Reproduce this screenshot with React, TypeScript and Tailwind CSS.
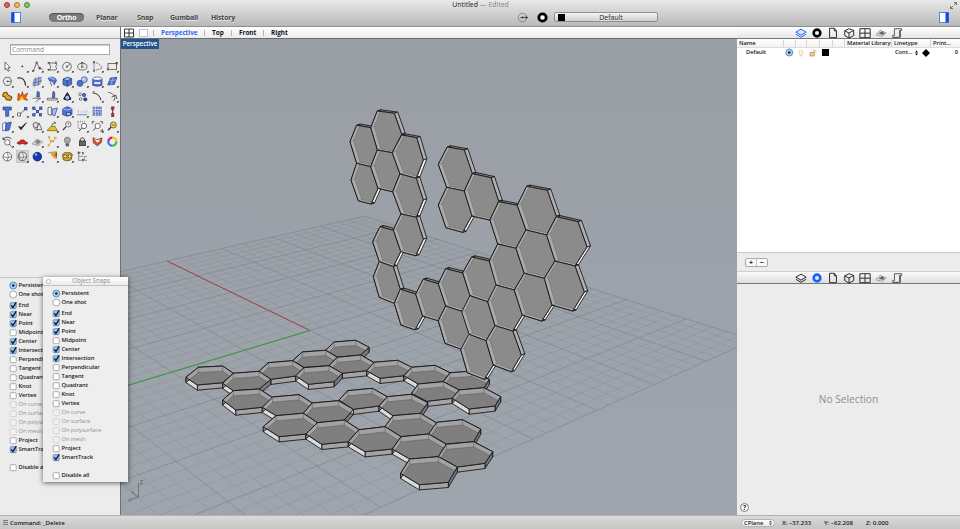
import React from "react";

type Pt = [number, number];

/* ---------- viewport geometry ---------- */

// Each cluster holds hexagons in thirds of a pixel, relative to its origin.
type Cluster = { ox: number; oy: number; hexes: number[][] };

// Vertex order: TL, TR, R, BR, BL, L
const wall: Cluster[] = [
  {
    ox: 340, oy: 100,
    hexes: [
      [112, 33, 163, 40, 185, 103, 157, 158, 112, 150, 92, 83],
      [50, 76, 92, 83, 112, 150, 92, 200, 50, 190, 30, 125],
      [50, 190, 92, 200, 114, 265, 93, 312, 55, 302, 33, 240],
      [112, 150, 157, 158, 180, 222, 158, 275, 114, 265, 92, 200],
      [185, 105, 230, 113, 250, 180, 229, 235, 180, 222, 157, 158],
      [180, 222, 229, 235, 250, 300, 229, 352, 183, 342, 158, 275],
    ],
  },
  {
    ox: 365, oy: 180,
    hexes: [
      [108, 102, 154, 112, 175, 178, 152, 227, 107, 215, 85, 150],
      [45, 140, 85, 151, 107, 215, 85, 260, 43, 245, 23, 185],
      [43, 245, 85, 260, 106, 328, 88, 370, 43, 352, 25, 290],
      [106, 328, 152, 342, 173, 408, 150, 449, 108, 435, 88, 370],
      [175, 298, 220, 311, 242, 378, 220, 422, 173, 408, 152, 342],
      [242, 266, 293, 279, 316, 348, 293, 395, 242, 378, 220, 311],
      [242, 378, 293, 395, 315, 465, 290, 508, 240, 490, 220, 422],
    ],
  },
  {
    ox: 430, oy: 130,
    hexes: [
      [52, 51, 103, 60, 127, 131, 103, 183, 50, 172, 25, 103],
      [50, 172, 103, 183, 126, 256, 98, 307, 48, 293, 25, 225],
      [127, 131, 183, 143, 206, 214, 180, 270, 126, 258, 103, 183],
      [125, 381, 178, 393, 200, 465, 173, 515, 120, 497, 98, 428],
      [120, 497, 173, 515, 195, 587, 168, 632, 117, 613, 95, 545],
      [117, 613, 168, 632, 190, 705, 163, 748, 112, 728, 92, 658],
      [206, 215, 262, 226, 288, 300, 258, 355, 203, 342, 180, 270],
      [203, 342, 258, 355, 283, 430, 253, 480, 198, 465, 178, 393],
      [198, 465, 253, 480, 277, 555, 248, 603, 195, 587, 173, 515],
      [195, 587, 248, 603, 274, 675, 244, 725, 190, 705, 168, 632],
      [290, 169, 352, 181, 379, 259, 350, 315, 288, 300, 262, 226],
      [288, 300, 350, 315, 375, 393, 343, 445, 283, 430, 258, 355],
      [283, 430, 343, 445, 366, 525, 335, 573, 277, 555, 253, 480],
      [379, 260, 444, 275, 471, 351, 435, 408, 375, 393, 350, 315],
      [375, 393, 435, 408, 463, 486, 428, 543, 366, 525, 343, 445],
    ],
  },
];

const floor: Cluster[] = [
  {
    ox: 180, oy: 330,
    hexes: [
      [462, 36, 527, 31, 567, 52, 542, 75, 472, 81, 437, 61],
      [367, 66, 437, 61, 472, 82, 447, 107, 372, 112, 338, 92],
      [265, 98, 338, 92, 372, 113, 348, 138, 272, 148, 237, 124],
      [55, 112, 128, 108, 160, 130, 128, 158, 52, 165, 18, 142],
      [160, 130, 237, 124, 272, 148, 238, 177, 160, 182, 128, 160],
      [472, 82, 542, 75, 582, 98, 560, 122, 485, 130, 447, 107],
      [372, 113, 447, 107, 487, 130, 462, 155, 385, 163, 347, 137],
      [160, 182, 238, 177, 278, 203, 247, 232, 167, 240, 128, 210],
      [278, 201, 357, 194, 397, 219, 370, 250, 288, 257, 247, 232],
      [397, 219, 475, 212, 520, 238, 493, 270, 412, 278, 370, 250],
      [288, 257, 370, 250, 412, 278, 378, 312, 297, 320, 250, 290],
      [412, 278, 493, 270, 537, 299, 505, 335, 425, 343, 378, 312],
    ],
  },
  {
    ox: 330, oy: 330,
    hexes: [
      [132, 97, 203, 91, 245, 112, 222, 137, 150, 145, 110, 122],
      [245, 112, 315, 106, 360, 128, 340, 155, 265, 162, 222, 137],
      [360, 128, 425, 124, 478, 148, 462, 173, 387, 180, 340, 155],
      [265, 162, 340, 155, 387, 180, 367, 205, 290, 214, 245, 190],
      [387, 180, 462, 173, 512, 200, 495, 228, 417, 237, 367, 205],
      [53, 182, 127, 175, 172, 200, 147, 228, 70, 238, 27, 210],
      [172, 200, 245, 193, 293, 218, 271, 250, 189, 257, 147, 228],
      [189, 257, 271, 250, 320, 279, 296, 312, 213, 320, 165, 290],
      [320, 277, 397, 269, 452, 297, 431, 335, 349, 342, 296, 312],
      [87, 299, 165, 290, 213, 320, 187, 357, 105, 365, 55, 335],
      [213, 320, 296, 312, 349, 343, 325, 380, 239, 387, 187, 357],
      [349, 343, 431, 335, 488, 365, 465, 400, 382, 411, 325, 380],
      [239, 387, 325, 380, 382, 411, 355, 457, 268, 464, 212, 430],
    ],
  },
];

const toPts = (c: Cluster): Pt[][] =>
  c.hexes.map((h) =>
    [0, 1, 2, 3, 4, 5].map((i) => [c.ox + h[2 * i] / 3, c.oy + h[2 * i + 1] / 3] as Pt),
  );

const str = (p: Pt[]) => p.map((q) => q[0].toFixed(1) + "," + q[1].toFixed(1)).join(" ");

function Shell({ id, clusters, dx, dy, shades, rim, base, line }: {
  id: string; clusters: Cluster[]; dx: number; dy: number; shades: string[]; rim: string; base: string; line: string;
}) {
  const hexes = clusters.flatMap(toPts);
  const shift = (p: Pt): Pt => [p[0] + dx, p[1] + dy];
  return (
    <g strokeLinejoin="round">
      {hexes.map((h, n) => (
        <g key={n} stroke="#141414" strokeWidth="0.85">
          {h.map((p, i) => {
            const q = h[(i + 1) % 6];
            return <polygon key={i} points={str([p, q, shift(q), shift(p)])} fill={shades[i]} />;
          })}
        </g>
      ))}
      {hexes.map((h, n) => (
        <g key={n}>
          <clipPath id={id + n}>
            <polygon points={str(h)} />
          </clipPath>
          <polygon points={str(h)} fill={rim} />
          <g clipPath={`url(#${id}${n})`}>
            {h.map((p, i) => (
              <line key={i} x1={p[0]} y1={p[1]} x2={p[0] + dx} y2={p[1] + dy} stroke={line} strokeWidth="0.5" />
            ))}
            <polygon points={str(h.map(shift))} fill={base} stroke={line} strokeWidth="0.5" />
          </g>
          <polygon points={str(h)} fill="none" stroke="#141414" strokeWidth="0.9" />
        </g>
      ))}
    </g>
  );
}

// Projective map taking the unit square's corners to a quad.
function projector(p0: Pt, p1: Pt, p2: Pt, p3: Pt) {
  const sx = p0[0] - p1[0] + p2[0] - p3[0];
  const sy = p0[1] - p1[1] + p2[1] - p3[1];
  const ax = p1[0] - p2[0], bx = p3[0] - p2[0];
  const ay = p1[1] - p2[1], by = p3[1] - p2[1];
  const det = ax * by - bx * ay;
  const g = (sx * by - bx * sy) / det;
  const h = (ax * sy - sx * ay) / det;
  const a = p1[0] - p0[0] + g * p1[0], b = p3[0] - p0[0] + h * p3[0];
  const d = p1[1] - p0[1] + g * p1[1], e = p3[1] - p0[1] + h * p3[1];
  return (u: number, v: number) => {
    const w = g * u + h * v + 1;
    return { w, x: (a * u + b * v + p0[0]) / w, y: (d * u + e * v + p0[1]) / w };
  };
}

const project = projector([310, 330.5], [167, 261], [365, 216], [523, 266.6]);

function GroundGrid() {
  const n = 20;
  const out: React.ReactElement[] = [];
  const segment = (key: string, at: (t: number) => [number, number], major: boolean) => {
    let lo = -1;
    while (lo < 1 && project(...at(lo)).w < 0.12) lo += 0.01;
    const a = project(...at(lo));
    const b = project(...at(1));
    out.push(
      <line key={key} x1={a.x} y1={a.y} x2={b.x} y2={b.y} stroke={major ? "#7b8189" : "#8b9199"} strokeWidth={major ? 0.6 : 0.5} />,
    );
  };
  for (let i = -n; i <= n; i++) {
    segment("u" + i, (t) => [i / n, t], i % 5 === 0);
    segment("v" + i, (t) => [t, i / n], i % 5 === 0);
  }
  return <g>{out}</g>;
}

function Viewport() {
  return (
    <svg className="block" width="616" height="476" viewBox="121 39 616 476">
      <defs>
        <linearGradient id="sky" x1="0" y1="0" x2="0" y2="1">
          <stop offset="0" stopColor="#9a9fa6" />
          <stop offset="1" stopColor="#9fa5ad" />
        </linearGradient>
      </defs>
      <rect x="121" y="39" width="616" height="476" fill="url(#sky)" />
      <GroundGrid />
      <line x1="310" y1="330.5" x2="167" y2="261" stroke="#a23a3a" strokeWidth="0.9" />
      <line x1="310" y1="330.5" x2="121" y2="387.5" stroke="#2f9a35" strokeWidth="1" />
      <Shell id="f" clusters={floor} dx={0} dy={5.2} shades={["#777", "#777", "#777", "#a4a4a4", "#dadada", "#8a8a8a"]} rim="#a3a3a3" base="#7f7f7f" line="#555" />
      <Shell id="w" clusters={wall} dx={3.5} dy={-1.2} shades={["#868686", "#b0b0b0", "#f4f4f4", "#999", "#888", "#888"]} rim="#ababab" base="#8b8b8b" line="#6a6a6a" />
      <g stroke="#5d636b" strokeWidth="0.7" fill="none">
        <path d="M138.500 497V483M138.500 497L129 499.500M138.500 497L132 492.500" />
        <path d="M140 480.500h3l-3 3h3M128 500l2 1.500 1.500-2M131 491l3 2" />
      </g>
    </svg>
  );
}

/* ---------- tool palette ---------- */

const Dots = ({ at }: { at: Pt[] }) => (
  <>{at.map(([x, y], i) => <rect key={i} x={x - 2} y={y - 2} width="4" height="4" fill="#fff" stroke="#333" strokeWidth="1.800" />)}</>
);
const Mark = () => <path d="M36 40h4v-4z" fill="#111" stroke="#111" strokeWidth="1.500" />;

const B = "#4f70cf";
const L = "#a9bdf3";
const D = "#263b86";

const tools: React.ReactNode[] = [
  <path d="M15 9V33L20 28L24 37L28 35L24 26H31Z" fill="#fff" />,
  <><circle cx="22" cy="22" r="1.8" fill="#222" /><Mark /></>,
  <><path d="M10 36L20 11L29 28L38 31" /><Dots at={[[10, 36], [20, 11], [29, 28]]} /><Mark /></>,
  <><path d="M12 12H30Q40 12 32 22Q38 33 30 33H14Q22 24 12 12" /><Dots at={[[11, 12], [33, 11], [11, 33]]} /><Mark /></>,
  <><circle cx="21" cy="23" r="13" /><path d="M21 23L31 13" /><Dots at={[[21, 23]]} /><Mark /></>,
  <><ellipse cx="22" cy="23" rx="14" ry="10" /><Dots at={[[22, 23], [22, 13]]} /><Mark /></>,
  <><path d="M12 35V10Q32 13 36 28L12 35" strokeDasharray="4 2" /><Dots at={[[12, 10], [12, 35]]} /><Mark /></>,
  <><rect x="9" y="13" width="26" height="18" /><Dots at={[[9, 31], [35, 13]]} /><Mark /></>,

  <><path d="M16 10L29 10L35 22L29 34L16 34L9 22Z" /><path d="M22 22H33" /><circle cx="22" cy="22" r="1.500" /><Mark /></>,
  <><path d="M10 12Q30 10 32 35" strokeWidth="3.500" /><rect x="7" y="9" width="5" height="5" fill="#777" stroke="none" /><Mark /></>,
  <><path d="M12 16L34 10L30 30L9 36Z" fill={L} stroke={B} /><path d="M18 10L14 38M27 8L24 36M8 28L36 20" stroke="#555" /><Mark /></>,
  <><path d="M9 12Q24 4 35 18L27 32Q26 20 14 21Z" fill={B} stroke={D} /><path d="M10 12Q20 8 28 18" stroke={L} strokeWidth="4" /><path d="M16 24L20 36" /><Mark /></>,
  <><path d="M9 16L22 10L35 14V31L22 37L9 32Z" fill={B} stroke={D} /><path d="M9 16L22 20L35 14L22 10Z" fill={L} stroke={D} /><path d="M22 20V37" stroke={D} /><Mark /></>,
  <><circle cx="15" cy="28" r="9" fill={B} stroke={D} /><circle cx="28" cy="17" r="9" fill={L} stroke={D} /><path d="M22 17L28 12" stroke="#fff" strokeWidth="3" /><Mark /></>,
  <><path d="M8 14V34Q22 40 36 34V14" fill={B} stroke={D} /><ellipse cx="22" cy="14" rx="14" ry="5" fill="#fff" stroke={D} /><path d="M13 27h18" stroke="#fff" strokeWidth="5" /><Mark /></>,
  <><path d="M16 12L36 10L28 31L8 33Z" fill={B} stroke={D} /><path d="M13 20L33 18M24 11L18 32" stroke={L} /><Mark /></>,

  <><path d="M10 12L20 9L24 18L36 24L32 34L18 32L16 24L8 22Z" fill="#e4a326" stroke="#5c3d05" strokeWidth="3" /></>,
  <><path d="M8 34L10 12L18 22L22 8L26 20L38 12L32 26L38 34L24 30Z" fill="#ec6b12" stroke="#8e2c06" /><path d="M14 33L20 22L28 32Z" fill="#ffd22e" stroke="none" /></>,
  <><path d="M22 7L28 10V24H20Z" fill={B} stroke={D} /><path d="M8 28H32L16 38" fill="#fff" /><Mark /></>,
  <><path d="M24 7L29 10V26H22Z" fill={B} stroke={D} /><path d="M7 28H37V33H7Z" fill="#fff" /><Mark /></>,
  <><path d="M22 11L33 30Q22 37 11 30Z" fill={D} stroke="#111" strokeWidth="3" /><circle cx="22" cy="26" r="6" fill={L} stroke="none" /><Mark /></>,
  <><circle cx="15" cy="16" r="4" fill="#fff" /><circle cx="27" cy="18" r="5" fill={B} stroke={D} /><circle cx="17" cy="30" r="4" fill="#fff" /><circle cx="31" cy="31" r="5" fill={D} stroke={D} /></>,
  <><path d="M8 12Q28 12 33 34" strokeWidth="3" /><path d="M8 8h6" /><Mark /></>,
  <><path d="M9 10Q26 12 30 26" strokeWidth="2" /><path d="M20 24L32 18L36 30M30 26L26 36" strokeWidth="2.500" /><Mark /></>,

  <><path d="M9 9H34V18H26V37H17V18H9Z" fill={B} stroke={D} /><Mark /></>,
  <><path d="M13 33L32 14" /><rect x="8" y="27" width="9" height="9" fill="#fff" /><rect x="28" y="10" width="8" height="8" fill={B} stroke={D} /><Mark /></>,
  <><path d="M12 12L33 34M12 34L33 12" stroke={D} /><g fill={B} stroke={D}><rect x="8" y="9" width="7" height="7" /><rect x="29" y="9" width="7" height="7" /><rect x="19" y="19" width="7" height="7" /><rect x="8" y="29" width="7" height="7" /><rect x="28" y="29" width="7" height="7" /></g></>,
  <><path d="M9 11L19 9V34L9 31Z" fill="#fff" /><path d="M22 15L37 12L29 36L22 32Z" fill={L} stroke={D} /><Mark /></>,
  <><path d="M8 14L22 8L36 14V31L22 37L8 32Z" fill={B} stroke={D} /><path d="M8 14L22 18L36 14" stroke={L} strokeWidth="3" /><rect x="19" y="25" width="13" height="10" fill={L} stroke={D} /><Mark /></>,
  <><path d="M7 32h30" stroke={B} strokeDasharray="4 2" strokeWidth="4" /><path d="M10 26v-8M18 26v-4M26 26v-4M34 26v-8" stroke="#999" /><Mark /></>,
  <g fill={L} stroke="#4a5da8" strokeWidth="1.800"><rect x="9" y="9" width="6" height="6" /><rect x="19" y="9" width="6" height="6" /><rect x="29" y="9" width="6" height="6" /><rect x="9" y="19" width="6" height="6" /><rect x="19" y="19" width="6" height="6" /><rect x="29" y="19" width="6" height="6" /><rect x="9" y="29" width="6" height="6" /><rect x="19" y="29" width="6" height="6" /><rect x="29" y="29" width="6" height="6" /></g>,
  <><path d="M18 9h11M23 9v28M18 37h10" stroke="#222" strokeWidth="2.500" /><circle cx="23" cy="14" r="4" fill="#d93636" stroke="#701010" /><circle cx="23" cy="31" r="4" fill="#d93636" stroke="#701010" /></>,

  <><path d="M8 14L18 9V32L8 36Z" fill="#fff" stroke={D} /><path d="M18 13L34 9L28 33L16 36Z" fill={B} stroke={D} /><Mark /></>,
  <path d="M11 23L18 32L34 11L19 25Z" fill="#111" strokeWidth="3" />,
  <><circle cx="17" cy="18" r="8" fill="#ddd" /><path d="M27 12L36 32H20Z" fill="#eee" /><path d="M11 26q6 8 12 8" /><Mark /></>,
  <><path d="M6 35L18 22H30L37 35Z" fill="#e8c527" stroke="#5f4d08" /><path d="M20 21Q20 10 32 11L27 7M32 11L28 16" /><Mark /></>,
  <><circle cx="25" cy="16" r="8" fill="#f4f4f4" /><path d="M18 23L9 33" strokeWidth="3.500" /><path d="M25 12v5" /></>,
  <><rect x="9" y="8" width="20" height="20" strokeDasharray="3 3" /><circle cx="27" cy="21" r="8" fill="#fff" /><path d="M20 28L12 36" strokeWidth="3" /><Mark /></>,
  <><circle cx="23" cy="21" r="8" fill="#fff" /><path d="M17 27L9 35M7 14V8H13M31 8h6v6M37 30v6H31" strokeWidth="2.500" /><Mark /></>,
  <><circle cx="25" cy="18" r="9" fill="#f5dc3d" /><path d="M18 25L9 34" strokeWidth="4" /><path d="M20 18h10" /><Mark /></>,

  <><circle cx="22" cy="25" r="8" fill="#fff" /><path d="M9 16Q21 4 34 14M9 10V17H15M28 31L34 37" strokeWidth="2.500" /><Mark /></>,
  <><path d="M7 25L13 23L17 18H27L31 23L37 25V29H7Z" fill="#df2222" stroke="#a51212" /><circle cx="14" cy="30" r="2" /><circle cx="31" cy="30" r="2" /></>,
  <><path d="M6 30L20 15L38 24L25 35Z" fill="#bcbcbc" stroke="#999" /><path d="M12 29L30 20M17 20L32 29" stroke="#eee" /><path d="M19 20h9v7h-9z" fill="#8a978b" stroke="#666" /><Mark /></>,
  <><path d="M9 10h7M27 11h8M14 22h13M8 34h7" stroke="#e9a92e" strokeWidth="6" /><path d="M12 13L18 20M30 15L23 22M13 31L18 25" stroke="#888" /><Mark /></>,
  <><path d="M17 28Q11 20 14 13Q22 5 30 13Q33 20 27 28Z" fill="#aaa" stroke="#666" /><path d="M18 30h8v6h-8z" fill="#777" stroke="#444" /></>,
  <><path d="M16 22V16Q22 6 28 16V22" strokeWidth="3" /><rect x="13" y="21" width="18" height="14" fill="#666" stroke="#222" /><Mark /></>,
  <><path d="M9 11L21 17L36 12L34 25L22 35L10 26Z" fill="#e8531d" stroke="#6d1e06" /><path d="M12 13L22 19L32 16L22 26Z" fill="#fff" stroke="none" /><path d="M10 26L22 35L34 25" stroke={B} strokeWidth="3" /></>,
  <g strokeWidth="7"><path d="M22 11A12 12 0 0 1 34 23" stroke="#f0c814" /><path d="M34 23A12 12 0 0 1 22 35" stroke="#33c438" /><path d="M22 35A12 12 0 0 1 10 23" stroke="#2a7ff0" /><path d="M10 23A12 12 0 0 1 14 14" stroke="#a02ad8" /><path d="M14 14A12 12 0 0 1 22 11" stroke="#ed2525" /></g>,

  <><circle cx="22" cy="23" r="13" fill="#fafafa" /><path d="M9 23Q22 30 35 23M22 10Q28 23 22 36" stroke="#555" /></>,
  <><rect x="5" y="5" width="36" height="36" fill="#d2d2d2" stroke="#999" strokeWidth="1" /><circle cx="22" cy="22" r="13" fill="#e8e8e8" /><path d="M9 23Q22 28 35 23M22 9Q29 22 22 35M14 12Q12 22 15 33" stroke="#555" strokeWidth="1.700" /><Mark /></>,
  <><circle cx="22" cy="23" r="13" fill="#1739b4" stroke="#0c1c60" /><circle cx="18" cy="17" r="4" fill="#8ba4f5" stroke="none" /><Mark /></>,
  <><path d="M15 12L36 8L34 30Q24 28 15 12Z" fill="#ee9a24" stroke="none" /><path d="M9 11L35 8" stroke="#777" /><path d="M31 16L36 10L34 30Z" fill="#333" stroke="none" /><Mark /></>,
  <><path d="M8 16L14 11H31L37 16L34 31L27 35H16L9 31Z" fill="#dba520" stroke="#4d3a06" /><circle cx="16" cy="22" r="5" fill="#f7e9a8" /><circle cx="29" cy="22" r="5" fill="#f7e9a8" /><Mark /></>,
  <><path d="M11 11V34H22M11 22H24M18 11H12M28 22H36M28 34H36M28 22V34" stroke="#666" /><Dots at={[[11, 11], [24, 13], [24, 34]]} /></>,
];

function Palette() {
  return (
    <div className="grid w-[120px] grid-cols-8">
      {tools.map((t, i) => (
        <svg key={i} className="h-[15px] w-[15px]" viewBox="0 0 45 45" fill="none" stroke="#333" strokeWidth="2">
          {t}
        </svg>
      ))}
    </div>
  );
}

/* ---------- object snaps ---------- */

const snaps: { name: string; on?: boolean; off?: boolean }[] = [
  { name: "End", on: true },
  { name: "Near", on: true },
  { name: "Point", on: true },
  { name: "Midpoint" },
  { name: "Center", on: true },
  { name: "Intersection", on: true },
  { name: "Perpendicular" },
  { name: "Tangent" },
  { name: "Quadrant" },
  { name: "Knot" },
  { name: "Vertex" },
  { name: "On curve", off: true },
  { name: "On surface", off: true },
  { name: "On polysurface", off: true },
  { name: "On mesh", off: true },
  { name: "Project" },
  { name: "SmartTrack", on: true },
];

function Box({ on, off }: { on?: boolean; off?: boolean }) {
  return (
    <svg className="h-[9px] w-[9px] shrink-0" viewBox="0 0 9 9">
      <rect x="1.2" y="1.700" width="6" height="6" rx="1" fill={on ? "#9cc5ee" : off ? "#f1f1f1" : "#fff"} stroke={on ? "#4b74a8" : off ? "#c8c8c8" : "#8d8d8d"} strokeWidth="0.7" />
      {on && <path d="M2.300 4.400L3.900 6.500L7.300 1.200" fill="none" stroke="#0d1830" strokeWidth="1.3" />}
    </svg>
  );
}

function Radio({ on }: { on?: boolean }) {
  return (
    <svg className="h-[9px] w-[9px] shrink-0" viewBox="0 0 9 9">
      <circle cx="4.300" cy="4.500" r="3.500" fill={on ? "#a7d0f7" : "#fff"} stroke={on ? "#3f6ca6" : "#888"} strokeWidth="0.7" />
      {on && <circle cx="4.300" cy="4.500" r="1.300" fill="#10213f" />}
    </svg>
  );
}

function Row({ icon, text, dim }: { icon: React.ReactNode; text: string; dim?: boolean }) {
  return (
    <div className={"flex h-[9px] items-center gap-[0.5px] whitespace-nowrap text-[5.8px] leading-[9px] tracking-[-0.08px] " + (dim ? "text-[#909090]" : "font-semibold text-[#1a1a1a]")}>
      {icon}
      <span>{text}</span>
    </div>
  );
}

function SnapList() {
  return (
    <div className="flex flex-col">
      <Row icon={<Radio on />} text="Persistent" />
      <Row icon={<Radio />} text="One shot" />
      <div className="h-[2px]" />
      {snaps.map((s) => (
        <Row key={s.name} icon={<Box on={s.on} off={s.off} />} text={s.name} dim={s.off} />
      ))}
      <div className="h-[9px]" />
      <Row icon={<Box />} text="Disable all" />
    </div>
  );
}

/* ---------- inspector ---------- */

function PanelTabs({ active }: { active: number }) {
  const c = (i: number, base = "#222") => (i === active ? "#1463ff" : base);
  return (
    <div className="flex h-[11px] items-center justify-center">
      {[
        <path d="M1 6L7 2.500L13 6L7 9.500ZM1 8.500L7 12L13 8.500" stroke={c(0)} fill={active === 0 ? "#dbe8ff" : "none"} />,
        <circle cx="7" cy="7" r="3.900" stroke={c(1, "#000")} strokeWidth="3" />,
        <path d="M3 1.500H8.500L11 4.500V12.500H3ZM8.500 1.500V4.500H11" />,
        <path d="M2 4.500L7 2L12.500 4V10L7 13L2 10ZM2 4.500L7 7L12.500 4M7 7V13" />,
        <path d="M1 2H13V12.500H1ZM7 2V12.500M1 7.200H13" />,
        <g stroke="#999"><path d="M1 9L6 4L13 7L8 11Z" fill="#ddd" /><path d="M5 7.500l4-2 1 3z" fill="#666" stroke="#555" /></g>,
        <path d="M4 2H12.500V4H10V12H2V10H4ZM10 12H11V4M2 12.500H9" stroke="#555" fill="#eee" />,
      ].map((d, i) => (
        <svg key={i} className="mx-[2px] h-[12px] w-[12px]" viewBox="0 0 14 14" fill="none" stroke="#222" strokeWidth="1.1">
          {d}
        </svg>
      ))}
    </div>
  );
}

function LayerTable() {
  return (
    <div className="flex h-[214px] flex-col border-b border-[#c9c9c9] bg-white text-[5.8px] font-semibold tracking-[-0.08px] text-[#1a1a1a]">
      <div className="flex h-[9px] items-center border-b border-[#dcdcdc] bg-gradient-to-b from-white to-[#f1f1f1] leading-[8px]">
        <span className="w-[46px] pl-[2px]">Name</span>
        {[12, 11, 13, 13, 12].map((w, i) => (
          <span key={i} className="h-[7px] border-l border-[#d4d4d4]" style={{ width: w }} />
        ))}
        <span className="w-[47px] whitespace-nowrap border-l border-[#d4d4d4] pl-[2px]">Material Library</span>
        <span className="w-[26px] border-l border-[#d4d4d4] pl-[2px]">Linetype</span>
        <span className="w-[13px] border-l border-[#d4d4d4]" />
        <span className="border-l border-[#d4d4d4] pl-[2px]">Print...</span>
      </div>
      <div className="flex h-[9px] items-center leading-[9px]">
        <span className="w-[48px] pl-[9px]">Default</span>
        <Radio on />
        <svg className="ml-[3px] h-[8px] w-[8px]" viewBox="0 0 8 8" fill="#fff6d8" stroke="#d8c9a0" strokeWidth="0.7">
          <path d="M3 5.500Q1 3 2.500 1.500Q4 .5 5.500 1.500Q7 3 5 5.500V7H3Z" />
        </svg>
        <svg className="ml-[4px] h-[8px] w-[8px]" viewBox="0 0 8 8" fill="#eec894" stroke="#b98a50" strokeWidth="0.7">
          <rect x="1" y="3.500" width="4.500" height="3.500" />
          <path d="M4 3.500V2Q5.500 0 6.800 2V3" fill="none" />
        </svg>
        <span className="ml-[5px] h-[7px] w-[7px] bg-black" />
        <span className="ml-[66px] w-[19px]">Cont...</span>
        <svg className="ml-[1px] h-[6px] w-[3px]" viewBox="0 0 3 6"><path d="M0 2.500L1.500 .5L3 2.500ZM0 3.500L1.500 5.500L3 3.500Z" /></svg>
        <svg className="ml-[4px] h-[8px] w-[8px]" viewBox="0 0 8 8"><path d="M4 0L8 4L4 8L0 4Z" /></svg>
        <span className="ml-auto pr-[2px]">0</span>
      </div>
    </div>
  );
}

/* ---------- window ---------- */

function SplitIcon({ flip }: { flip?: boolean }) {
  return (
    <svg className="h-[11px] w-[10px]" viewBox="0 0 10 11">
      <rect x=".5" y=".5" width="9" height="10" fill="#fff" stroke="#4d86f5" />
      <rect x={flip ? 6.500 : 0.5} y=".5" width="3" height="10" fill="#1048e6" />
    </svg>
  );
}

function FourView() {
  return (
    <svg className="h-[10px] w-[10px]" viewBox="0 0 10 10" fill="#fff" stroke="#222" strokeWidth="0.9">
      <path d="M.5 1H9.500V9H.5ZM5 1V9M.5 5H9.500" />
    </svg>
  );
}

const lights = [
  "border-[#a5352f] bg-[#ee5f57]",
  "border-[#a9792a] bg-[#f6bd4a]",
  "border-[#4c8a35] bg-[#7fcb5c]",
];

export default function App() {
  return (
    <div className="relative flex h-[529px] w-[960px] flex-col overflow-hidden bg-[#ececec] font-['Open_Sans','Noto_Sans',sans-serif] text-[#222]">
      <header className="h-[27px] border-b border-[#8f8f8f] bg-gradient-to-b from-[#e9e9e9] to-[#b9b9b9]">
        <div className="flex h-[10px] items-center">
          <div className="flex w-[100px] gap-[4px] pl-[4px]">
            {lights.map((c) => <span key={c} className={"h-[6px] w-[6px] rounded-full border-[0.5px] " + c} />)}
          </div>
          <div className="w-[761px] text-center text-[6.900px] font-medium leading-[10px]">
            Untitled <span className="text-[#858585]">— Edited</span>
          </div>
          <svg className="ml-auto mr-[3px] h-[7px] w-[7px]" viewBox="0 0 7 7" fill="none" stroke="#666" strokeWidth="0.9">
            <path d="M4 3L6.500 .5M4 .5H6.500V3M3 4L.5 6.500M.5 4V6.500H3" />
          </svg>
        </div>
        <div className="flex h-[14px] items-center text-[6.900px] font-bold leading-[9px] tracking-[-0.15px] text-[#444] [text-shadow:0_1px_0_#eee]">
          <div className="w-[49px] pl-[11px]"><SplitIcon /></div>
          <span className="h-[9px] w-[35px] rounded-full bg-[#7a7a7a] text-center text-white shadow-[inset_0_1px_1px_#555] [text-shadow:none]">Ortho</span>
          <span className="ml-[12px] w-[41px]">Planar</span>
          <span className="w-[33px]">Snap</span>
          <span className="w-[41px]">Gumball</span>
          <span className="w-[306px]">History</span>
          <svg className="h-[11px] w-[11px]" viewBox="0 0 11 11" fill="none" stroke="#777" strokeWidth="0.8">
            <circle cx="5.500" cy="5.500" r="4.300" /><path d="M3.500 5.500H10.500M8.500 4.200L10.500 5.500L8.500 6.800" stroke="#333" /><circle cx="5.300" cy="5.500" r="0.900" fill="#333" stroke="none" />
          </svg>
          <svg className="ml-[9px] h-[11px] w-[11px]" viewBox="0 0 11 11" fill="#fff" stroke="#000" strokeWidth="2.800">
            <circle cx="5.500" cy="5.500" r="3.700" />
          </svg>
          <div className="ml-[6px] flex h-[10px] w-[104px] items-center rounded-[2px] border border-[#8f8f8f] bg-gradient-to-b from-[#f4f4f4] to-[#cfcfcf]">
            <span className="ml-[3px] h-[7px] w-[7px] bg-black" />
            <span className="flex-1 text-center font-medium tracking-normal text-[#222]">Default</span>
          </div>
          <div className="ml-auto mr-[11px]"><SplitIcon flip /></div>
        </div>
      </header>

      <main className="flex h-[488px]">
        <aside className="flex w-[120px] flex-col">
          <div className="h-[12px] border-b border-[#a5a5a5] bg-gradient-to-b from-[#fafafa] to-[#e6e6e6]" />
          <div className="ml-[10px] mt-[5px] h-[11px] w-[100px] border border-[#aaa] bg-white pl-[1px] text-[6.600px] leading-[9px] text-[#8a8a8a] shadow-[inset_0_1px_0_#ccc]">Command</div>
          <div className="mt-[3.500px]"><Palette /></div>
          <div className="mt-[113.500px] border-t border-[#c4c4c4] pl-[9px] pt-[2.500px]">
            <SnapList />
          </div>
        </aside>

        <section className="flex w-[617px] flex-col border-l border-[#6d7279]">
          <div className="flex h-[12px] items-center border-b border-[#666c73] bg-gradient-to-b from-white to-[#ebebeb] text-[6.400px] font-bold leading-[10px] text-[#111]">
            <div className="flex w-[32px] items-center gap-[5px] pl-[3px]">
              <FourView />
              <span className="h-[8px] w-[9px] border border-[#b6c4f2] bg-white" />
            </div>
            <span className="h-[6px] w-px bg-[#b5b5b5]" />
            <span className="w-[50px] pl-[7px] tracking-[-0.05px] text-[#2d6cf6]">Perspective</span>
            <span className="h-[6px] w-px bg-[#b5b5b5]" />
            <span className="w-[26px] pl-[7px]">Top</span>
            <span className="h-[6px] w-px bg-[#b5b5b5]" />
            <span className="w-[31px] pl-[7px]">Front</span>
            <span className="h-[6px] w-px bg-[#b5b5b5]" />
            <span className="pl-[7px]">Right</span>
          </div>
          <div className="relative h-[476px]">
            <Viewport />
            <span className="absolute left-0 top-0 h-[10px] w-[38px] bg-[#215489] text-center text-[6.200px] font-semibold leading-[10px] text-white">Perspective</span>
          </div>
        </section>

        <aside className="flex w-[223px] flex-col">
          <div className="h-[12px] border-b border-[#777] bg-gradient-to-b from-white to-[#e6e6e6]">
            <PanelTabs active={0} />
          </div>
          <LayerTable />
          <div className="flex h-[18px] items-center pl-[8px]">
            <div className="flex h-[9px] w-[23px] rounded-[2px] border border-[#a9a9a9] bg-[#f8f8f8] text-center text-[7px] font-bold leading-[7px]">
              <span className="flex-1 border-r border-[#c4c4c4]">+</span>
              <span className="flex-1">−</span>
            </div>
          </div>
          <div className="h-[13px] border-b border-t border-b-[#777] border-t-[#cfcfcf] bg-gradient-to-b from-[#fafafa] to-[#dedede]">
            <PanelTabs active={1} />
          </div>
          <div className="flex flex-1 flex-col justify-between">
            <div className="pt-[108px] text-center text-[10.200px] leading-[14px] text-[#8f8f8f]">No Selection</div>
            <div className="mb-[3px] ml-[3px] h-[9px] w-[9px] rounded-full border border-[#777] bg-white text-center text-[6.500px] font-bold leading-[7px]">?</div>
          </div>
        </aside>
      </main>

      <footer className="flex h-[14px] items-center border-t border-[#b0b0b0] bg-gradient-to-b from-[#dadada] to-[#c6c6c6] text-[6.100px] font-semibold leading-[12px] text-[#1a1a1a]">
        <span className="ml-[3px] h-[5px] w-[5px] bg-[repeating-linear-gradient(#777_0_1px,#ccc_1px_2px)]" />
        <span className="ml-[2px] w-[33px] tracking-[-0.1px]">Command:</span>
        <span className="w-[698px]">_Delete</span>
        <div className="flex h-[8px] w-[34px] items-center justify-between rounded-full border border-[#b4b4b4] bg-gradient-to-b from-white to-[#e9e9e9] px-[2px] text-[5.800px]">
          <span>CPlane</span>
          <svg className="h-[6px] w-[3px]" viewBox="0 0 3 6" fill="#555"><path d="M0 2.500L1.500 .5L3 2.500ZM0 3.500L1.500 5.500L3 3.500Z" /></svg>
        </div>
        <span className="ml-[7px] w-[42px]">X: –37.233</span>
        <span className="w-[42px]">Y: –62.208</span>
        <span>Z: 0.000</span>
      </footer>

      <div className="absolute left-[43px] top-[277px] h-[205px] w-[85px] bg-[#eee] shadow-[0_1px_5px_#0009]">
        <div className="flex h-[9px] items-center border-b border-[#c3c3c3] bg-gradient-to-b from-white to-[#ececec] text-[6.200px] leading-[8px] text-[#8b8b8b]">
          <span className="ml-[3px] h-[5px] w-[5px] rounded-full border border-[#bbb] bg-white" />
          <span className="flex-1 pl-[3px] text-center">Object Snaps</span>
        </div>
        <div className="pl-[9px] pt-[3px]"><SnapList /></div>
      </div>
    </div>
  );
}
